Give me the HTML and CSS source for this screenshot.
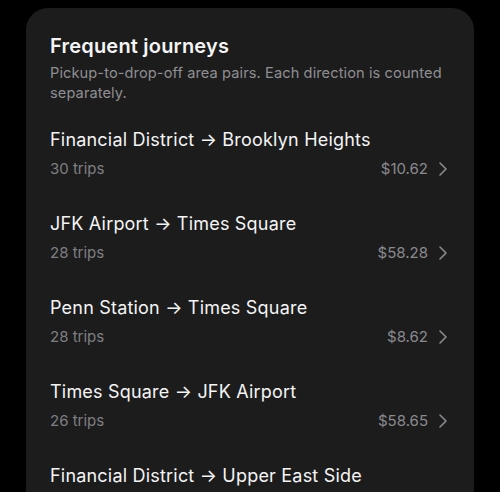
FILE: index.html
```html
<!DOCTYPE html>
<html lang="en">
<head>
<meta charset="utf-8">
<title>Frequent journeys</title>
<link rel="stylesheet" href="styles.css">
</head>
<body>
<section class="card">
  <header class="card-header">
    <h2 class="card-title">Frequent journeys</h2>
    <p class="card-subtitle">Pickup-to-drop-off area pairs. Each direction is counted separately.</p>
  </header>
  <ul class="journeys">
    <li class="journey">
      <div class="journey-route">Financial District → Brooklyn Heights</div>
      <div class="journey-meta">
        <span class="journey-trips">30 trips</span>
        <span class="journey-end"><span class="journey-price">$10.62</span><svg class="chevron" viewBox="0 0 16 16" width="16" height="16"><path d="M6 2 L12 8 L6 14"/></svg></span>
      </div>
    </li>
    <li class="journey">
      <div class="journey-route">JFK Airport → Times Square</div>
      <div class="journey-meta">
        <span class="journey-trips">28 trips</span>
        <span class="journey-end"><span class="journey-price">$58.28</span><svg class="chevron" viewBox="0 0 16 16" width="16" height="16"><path d="M6 2 L12 8 L6 14"/></svg></span>
      </div>
    </li>
    <li class="journey">
      <div class="journey-route">Penn Station → Times Square</div>
      <div class="journey-meta">
        <span class="journey-trips">28 trips</span>
        <span class="journey-end"><span class="journey-price">$8.62</span><svg class="chevron" viewBox="0 0 16 16" width="16" height="16"><path d="M6 2 L12 8 L6 14"/></svg></span>
      </div>
    </li>
    <li class="journey">
      <div class="journey-route">Times Square → JFK Airport</div>
      <div class="journey-meta">
        <span class="journey-trips">26 trips</span>
        <span class="journey-end"><span class="journey-price">$58.65</span><svg class="chevron" viewBox="0 0 16 16" width="16" height="16"><path d="M6 2 L12 8 L6 14"/></svg></span>
      </div>
    </li>
    <li class="journey">
      <div class="journey-route">Financial District → Upper East Side</div>
    </li>
  </ul>
</section>
</body>
</html>
```

FILE: styles.css
```css
html, body {
  margin: 0;
  padding: 0;
  background: #000;
  height: 100%;
  overflow: hidden;
}
body {
  padding: 8px 26px 0;
  box-sizing: border-box;
  font-family: Inter, "Noto Sans", sans-serif;
  -webkit-font-smoothing: antialiased;
}
.card {
  background: #1c1c1d;
  border-radius: 22px;
  padding: 24px 24px 0;
  height: 520px;
  box-sizing: border-box;
  overflow: hidden;
}
.card-header {
  margin-bottom: 9px;
}
.card-title {
  margin: 0;
  font-size: 20px;
  line-height: 28px;
  font-weight: 600;
  color: #f4f4f4;
  letter-spacing: 0.2px;
}
.card-subtitle {
  margin: 3px 0 0;
  font-size: 14.6px;
  line-height: 20px;
  color: #8f8f91;
  letter-spacing: 0.1px;
}
.journeys {
  list-style: none;
  margin: 0;
  padding: 0;
}
.journey {
  padding: 16px 0 17px;
}
.journey-route {
  font-size: 18px;
  line-height: 24px;
  font-weight: 400;
  color: #f4f4f4;
  letter-spacing: 0.2px;
}
.journey-meta {
  margin-top: 7px;
  display: flex;
  align-items: center;
  justify-content: space-between;
  height: 20px;
}
.journey-trips {
  font-size: 15px;
  line-height: 20px;
  color: #7f7f82;
}
.journey-end {
  display: flex;
  align-items: center;
  gap: 6px;
}
.journey-price {
  font-size: 15px;
  line-height: 20px;
  color: #8a8a8d;
}
.chevron {
  fill: none;
  stroke: #8a8a8d;
  stroke-width: 1.6;
  stroke-linecap: round;
  stroke-linejoin: round;
}
```
